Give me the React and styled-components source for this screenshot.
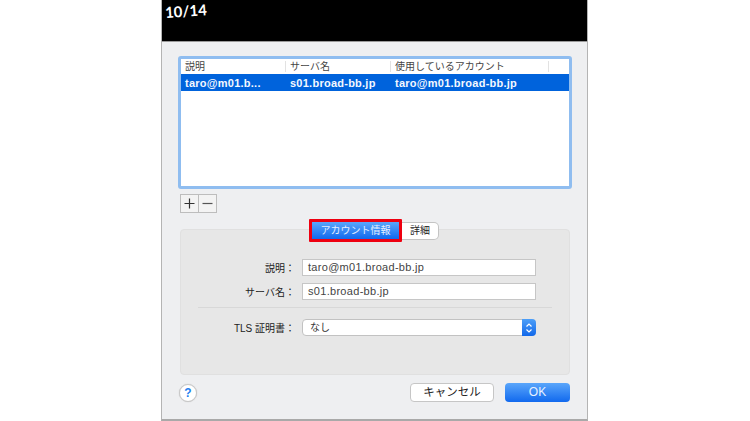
import React from 'react';
import styled, { createGlobalStyle } from 'styled-components';

const jp = '"Liberation Sans", "Noto Sans CJK JP", sans-serif';

const GlobalStyle = createGlobalStyle`
  html, body { margin: 0; padding: 0; background: #fff; }
  body { font-family: ${jp}; overflow: hidden; }
`;

const Page = styled.div`
  width: 750px;
  height: 421px;
  display: flex;
  padding-left: 161px;
  box-sizing: border-box;
`;

const Dialog = styled.div`
  width: 427px;
  height: 421px;
  box-sizing: border-box;
  background: #eeeff1;
  border-left: 1px solid #b4b4b4;
  border-right: 1px solid #b4b4b4;
  border-bottom: 2px solid #a9a9a9;
  display: flex;
  flex-direction: column;
`;

const Header = styled.div`
  height: 42px;
  flex: none;
  background: #000;
  border-bottom: 1px solid #9a9a9a;
  box-sizing: border-box;
  color: #fff;
  padding: 3px 0 0 3px;
`;

const Counter = styled.div`
  font: 700 15px/18px "Lato", sans-serif;
  transform: rotate(-4deg);
  transform-origin: left center;
  width: 44px;
`;

const Content = styled.div`
  flex: 1;
  padding: 14px 15px 0 16px;
  display: flex;
  flex-direction: column;
`;

const List = styled.div`
  height: 133px;
  box-sizing: border-box;
  background: #fff;
  border: 3px solid #8fbdf0;
  border-radius: 3px;
  flex: none;
`;

const columns = '105px 105px 158px 1fr';

const HeadRow = styled.div`
  display: grid;
  grid-template-columns: ${columns};
  height: 15px;
  align-items: center;
  font-size: 10px;
  color: #444;
`;

const HeadCell = styled.div`
  padding-left: 4px;
  height: 11px;
  line-height: 11px;
  border-right: 1px solid #e2e2e2;
  white-space: nowrap;
`;

const SelectedRow = styled.div`
  display: grid;
  grid-template-columns: ${columns};
  height: 17px;
  align-items: center;
  background: #0063dc;
  color: #f4f8ff;
  font-size: 11px;
  font-weight: 700;
  letter-spacing: 0.25px;
`;

const RowCell = styled.div`
  padding-left: 4px;
  white-space: nowrap;
`;

const AddRemove = styled.div`
  display: flex;
  margin: 5px 0 0 2px;
  flex: none;
`;

const SquareButton = styled.div`
  width: 19px;
  height: 19px;
  box-sizing: border-box;
  background: #f3f3f3;
  border: 1px solid #bdbdbd;
  margin-right: -1px;
  display: flex;
  align-items: center;
  justify-content: center;
  svg { display: block; }
`;

const Tabs = styled.div`
  display: flex;
  justify-content: flex-start;
  margin: 6px 0 -13px 131px;
  height: 23px;
  align-items: center;
  position: relative;
  z-index: 1;
`;

const ActiveTab = styled.div`
  width: 87px;
  height: 17px;
  box-sizing: content-box;
  border: 3px solid #ee0010;
  background: linear-gradient(#5aa6fb, #1169ee);
  background-clip: padding-box;
  border-radius: 1px;
  color: #e4efff;
  font-size: 10px;
  line-height: 17px;
  text-align: center;
`;

const Tab = styled.div`
  width: 36px;
  height: 16px;
  background: #fff;
  border: 1px solid #c4c4c4;
  border-left: none;
  border-radius: 0 5px 5px 0;
  color: #222;
  font-size: 10px;
  line-height: 16px;
  text-align: center;
`;

const Panel = styled.div`
  height: 146px;
  flex: none;
  box-sizing: border-box;
  margin: 0 2px;
  background: #e7e7e7;
  border: 1px solid #e0e0e0;
  border-radius: 4px;
  padding-top: 29px;
  display: flex;
  flex-direction: column;
`;

const FieldRow = styled.div`
  display: grid;
  grid-template-columns: 114px 234px;
  column-gap: 7px;
  align-items: center;
  height: 17px;
  margin-bottom: ${p => p.$gap || 0}px;
`;

const Label = styled.div`
  font-size: 10px;
  color: #222;
  text-align: right;
  white-space: nowrap;
`;

const TextInput = styled.div`
  height: 17px;
  box-sizing: border-box;
  background: #fff;
  border: 1px solid #c6c6c6;
  font-size: 11px;
  line-height: 15px;
  color: #444;
  padding-left: 5px;
  letter-spacing: 0.3px;
`;

const Divider = styled.div`
  height: 1px;
  background: #d8d8d8;
  margin: 0 17px 11px 17px;
`;

const Select = styled.div`
  height: 17px;
  box-sizing: border-box;
  background: #fff;
  border: 1px solid #c2c2c2;
  border-radius: 4px;
  font-size: 10px;
  line-height: 15px;
  color: #333;
  padding-left: 7px;
  position: relative;
`;

const SelectArrow = styled.div`
  position: absolute;
  top: -1px;
  right: -1px;
  width: 14px;
  height: 17px;
  background: linear-gradient(#4d9ff8, #1268ea);
  border-radius: 0 4px 4px 0;
  display: flex;
  align-items: center;
  justify-content: center;
`;

const Footer = styled.div`
  display: flex;
  align-items: center;
  height: 19px;
  margin: 8px 2px 0 1px;
`;

const Help = styled.div`
  width: 18px;
  height: 18px;
  box-sizing: border-box;
  border-radius: 50%;
  background: #fff;
  border: 1px solid #c8c8c8;
  box-shadow: 0 0 1px #bbb;
  color: #1f7fef;
  font-size: 12px;
  font-weight: 700;
  line-height: 16px;
  text-align: center;
  margin: 1px 0 0 0;
`;

const Spacer = styled.div`
  flex: 1;
`;

const CancelButton = styled.div`
  width: 84px;
  height: 19px;
  box-sizing: border-box;
  background: #fff;
  border: 1px solid #c6c6c6;
  border-radius: 4px;
  font-size: 11.5px;
  line-height: 17px;
  color: #222;
  text-align: center;
  margin-right: 11px;
`;

const OkButton = styled.div`
  width: 65px;
  height: 19px;
  background: linear-gradient(#5aa6fb, #1169ee);
  border-radius: 4px;
  font-size: 12px;
  line-height: 19px;
  color: #e8f1ff;
  text-align: center;
`;

const App = () => (
  <Page>
    <GlobalStyle />
    <Dialog>
      <Header>
        <Counter>10/14</Counter>
      </Header>
      <Content>
        <List>
          <HeadRow>
            <HeadCell>説明</HeadCell>
            <HeadCell>サーバ名</HeadCell>
            <HeadCell>使用しているアカウント</HeadCell>
          </HeadRow>
          <SelectedRow>
            <RowCell>taro@m01.b...</RowCell>
            <RowCell>s01.broad-bb.jp</RowCell>
            <RowCell>taro@m01.broad-bb.jp</RowCell>
          </SelectedRow>
        </List>
        <AddRemove>
          <SquareButton>
            <svg width="11" height="11" viewBox="0 0 11 11">
              <path d="M5.500 0.500v10M0.500 5.500h10" stroke="#333" strokeWidth="1.200" />
            </svg>
          </SquareButton>
          <SquareButton>
            <svg width="11" height="11" viewBox="0 0 11 11">
              <path d="M0.500 5.500h10" stroke="#555" strokeWidth="1.200" />
            </svg>
          </SquareButton>
        </AddRemove>
        <Tabs>
          <ActiveTab>アカウント情報</ActiveTab>
          <Tab>詳細</Tab>
        </Tabs>
        <Panel>
          <FieldRow $gap={7}>
            <Label>説明：</Label>
            <TextInput>taro@m01.broad-bb.jp</TextInput>
          </FieldRow>
          <FieldRow $gap={7}>
            <Label>サーバ名：</Label>
            <TextInput>s01.broad-bb.jp</TextInput>
          </FieldRow>
          <Divider />
          <FieldRow>
            <Label>TLS 証明書：</Label>
            <Select>
              なし
              <SelectArrow>
                <svg width="8" height="12" viewBox="0 0 8 12">
                  <path d="M1.500 4.500L4 2l2.500 2.500M1.500 7.500L4 10l2.500-2.500" fill="none" stroke="#fff" strokeWidth="1.200" />
                </svg>
              </SelectArrow>
            </Select>
          </FieldRow>
        </Panel>
        <Footer>
          <Help>?</Help>
          <Spacer />
          <CancelButton>キャンセル</CancelButton>
          <OkButton>OK</OkButton>
        </Footer>
      </Content>
    </Dialog>
  </Page>
);

export default App;
